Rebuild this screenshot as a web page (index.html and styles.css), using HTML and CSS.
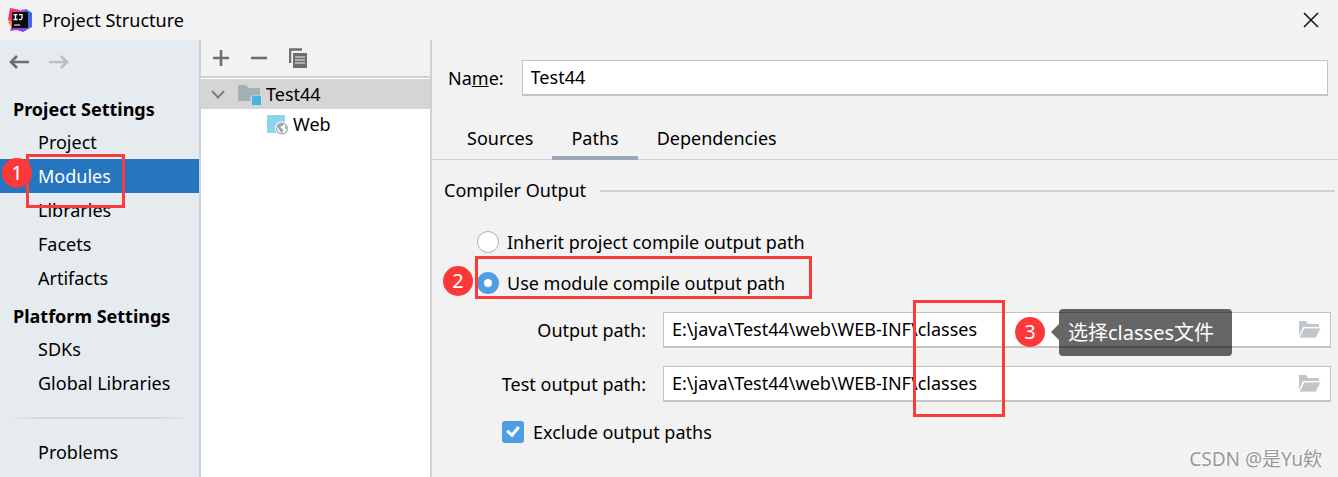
FILE: index.html
```html
<!DOCTYPE html>
<html lang="en">
<head>
<meta charset="utf-8">
<title>Project Structure</title>
<link rel="stylesheet" href="styles.css">
</head>
<body>
<div class="window">
  <header class="titlebar">
    <svg class="logo" width="24" height="24" viewBox="0 0 24 24" aria-hidden="true">
      <defs>
        <linearGradient id="pink" x1="0" y1="0" x2="1" y2="1"><stop offset="0" stop-color="#ff2d50"/><stop offset="1" stop-color="#e8379a"/></linearGradient>
        <linearGradient id="blue" x1="0" y1="0" x2="0" y2="1"><stop offset="0" stop-color="#2f6fe0"/><stop offset="1" stop-color="#5a5cf0"/></linearGradient>
      </defs>
      <path d="M0 14l6-3 4 9-6 0z" fill="#f78a1f"/>
      <path d="M2 0l10 2 3 5-8 9-7-4z" fill="url(#pink)"/>
      <path d="M13 3l5-2 6 4v14l-9 5-6-4z" fill="url(#blue)"/>
      <path d="M11 4l4-3 3 5-5 1z" fill="#b54ac8"/>
      <path d="M4 17h6l6 7-4-1-4-1-6 1z" fill="#a33fd6"/>
      <rect x="4" y="4" width="16" height="16" fill="#0c0a10"/>
      <path d="M5.500 6.600h4M7.500 6.600v5M5.500 11.500h4M11 6.600h3v3.500q0 1.500-1.500 1.500H11" fill="none" stroke="#fff" stroke-width="1.300"/>
      <path d="M6 17h6" stroke="#fff" stroke-width="1"/>
    </svg>
    <h1 class="title">Project Structure</h1>
    <button class="close" aria-label="Close">
      <svg width="16" height="16" viewBox="0 0 16 16"><path d="M1 1l14 14M15 1L1 15" stroke="#111" stroke-width="1.500"/></svg>
    </button>
  </header>

  <div class="content">
    <nav class="sidebar">
      <div class="history">
        <button class="icon-button" aria-label="Back"><svg width="20" height="14" viewBox="0 0 20 14" fill="none" stroke="#6e6e6e" stroke-width="2.600"><path d="M20 7H2M8 1L2 7l6 6"/></svg></button>
        <button class="icon-button" aria-label="Forward"><svg width="20" height="14" viewBox="0 0 20 14" fill="none" stroke="#bdbfc1" stroke-width="2.600"><path d="M0 7h18M12 1l6 6-6 6"/></svg></button>
      </div>
      <h2 class="group">Project Settings</h2>
      <ul class="links">
        <li><a href="#">Project</a></li>
        <li class="marked"><a href="#" class="selected" aria-current="page">Modules</a><span class="frame frame-modules"></span><span class="step step-one">1</span></li>
        <li><a href="#">Libraries</a></li>
        <li><a href="#">Facets</a></li>
        <li><a href="#">Artifacts</a></li>
      </ul>
      <h2 class="group">Platform Settings</h2>
      <ul class="links">
        <li><a href="#">SDKs</a></li>
        <li><a href="#">Global Libraries</a></li>
      </ul>
      <div class="separator"></div>
      <ul class="links">
        <li><a href="#">Problems</a></li>
      </ul>
    </nav>

    <section class="modules" aria-label="Modules">
      <div class="toolbar">
        <button class="icon-button" aria-label="Add"><svg width="16" height="16" viewBox="0 0 16 16"><path d="M8 0v16M0 8h16" stroke="#6e6e6e" stroke-width="2.600"/></svg></button>
        <button class="icon-button" aria-label="Remove"><svg width="16" height="16" viewBox="0 0 16 16"><path d="M0 8h16" stroke="#6e6e6e" stroke-width="2.600"/></svg></button>
        <button class="icon-button" aria-label="Copy"><svg width="20" height="20" viewBox="0 0 20 20"><path d="M1 15V1.500h12" fill="none" stroke="#6e6e6e" stroke-width="2.500"/><path d="M4 5h14v15H4z" fill="#6e6e6e"/><path d="M6 9h10M6 12h10M6 15h10" stroke="#f2f2f2" stroke-width="1.200"/></svg></button>
      </div>
      <ul class="tree">
        <li class="node current">
          <svg width="14" height="9" viewBox="0 0 14 9"><path d="M1 1l6 6.500L13 1" fill="none" stroke="#7f7f7f" stroke-width="2"/></svg>
          <svg class="folder" width="24" height="22" viewBox="0 0 24 22"><path d="M0 2h8l3 3h11v13H0z" fill="#a4b0b8"/><path d="M12.500 12.500H24V22H12.500z" fill="#d5d5d5"/><path d="M14 13h9v9h-9z" fill="#40b6e0"/></svg>
          <span>Test44</span>
        </li>
        <li class="node child">
          <svg width="22" height="22" viewBox="0 0 22 22"><path d="M0 2h18v18H0z" fill="#8dd5ec"/><circle cx="15" cy="15.500" r="7" fill="#fff"/><circle cx="15" cy="15.500" r="5.400" fill="#fff" stroke="#9aa7b0" stroke-width="1.200"/><path d="M10 13l3-3 4 .5-1 2-3 1.500 2 1.500 1.500 2-2 3-1.500-2.500zM18 12l2 3-2 1z" fill="#9aa7b0"/></svg>
          <span>Web</span>
        </li>
      </ul>
    </section>

    <main class="editor">
      <div class="name-row">
        <label for="name">Na<u>m</u>e:</label>
        <input class="textbox" id="name" type="text" value="Test44">
      </div>
      <div class="tabs" role="tablist">
        <button class="tab" role="tab">Sources</button>
        <button class="tab active" role="tab" aria-selected="true">Paths</button>
        <button class="tab" role="tab">Dependencies</button>
      </div>
      <fieldset class="compiler">
        <legend class="legend">Compiler Output</legend>
        <div class="option"><input type="radio" name="mode" id="inherit"><label for="inherit">Inherit project compile output path</label></div>
        <div class="option marked"><input type="radio" name="mode" id="module" checked><label for="module">Use module compile output path</label><span class="frame frame-option"></span><span class="step step-two">2</span></div>
        <div class="paths marked">
          <label for="output">Output path:</label>
          <div class="textbox browse">
            <input id="output" type="text" value="E:\java\Test44\web\WEB-INF\classes">
            <button class="icon-button" aria-label="Browse output path"><svg width="24" height="20" viewBox="0 0 24 20"><path d="M1 17V2h7l2 3h11v3H5z" fill="#c1c6ca"/><path d="M6 9h17l-5 10H1z" fill="#c1c6ca" stroke="#fff" stroke-width=".8"/></svg></button>
          </div>
          <label for="test-output">Test output path:</label>
          <div class="textbox browse">
            <input id="test-output" type="text" value="E:\java\Test44\web\WEB-INF\classes">
            <button class="icon-button" aria-label="Browse test output path"><svg width="24" height="20" viewBox="0 0 24 20"><path d="M1 17V2h7l2 3h11v3H5z" fill="#c1c6ca"/><path d="M6 9h17l-5 10H1z" fill="#c1c6ca" stroke="#fff" stroke-width=".8"/></svg></button>
          </div>
          <span class="frame frame-paths"></span>
          <span class="step step-three">3</span>
          <span class="tip">选择classes文件</span>
        </div>
        <div class="exclude"><input type="checkbox" id="exclude" checked><label for="exclude">Exclude output paths</label></div>
      </fieldset>
      <div class="watermark">CSDN @是Yu欸</div>
    </main>
  </div>
</div>
</body>
</html>
```
FILE: styles.css
```css
* { box-sizing: border-box; }
body {
  margin: 0;
  background: #f2f2f2;
  color: #000;
  font: 18px/24px "Noto Sans", "Noto Sans CJK SC", sans-serif;
}
button, input { font: inherit; color: inherit; }
button { border: 0; padding: 0; background: none; }
ul { list-style: none; margin: 0; padding: 0; }
svg { display: block; flex: none; }
.window { min-height: 100vh; display: flex; flex-direction: column; }
.titlebar { display: flex; align-items: center; gap: 10px; height: 40px; padding: 0 19px 0 8px; }
.title { flex: 1; margin: 0; font-size: 18px; font-weight: 400; }
.content { flex: 1; display: grid; grid-template-columns: 201px 231px 1fr; }

.sidebar { background: #e6ebef; border-right: 2px solid #d1d1d1; }
.history { display: flex; gap: 20px; padding: 15px 9px; height: 48px; }
.icon-button { display: flex; align-items: center; justify-content: center; flex: none; }
.history .icon-button { height: 14px; }
.group { margin: 5px 0 0; padding-left: 13px; font-size: 18px; font-weight: 700; line-height: 32px; }
.links a { display: block; padding-left: 38px; line-height: 34px; color: #000; text-decoration: none; }
.links .selected { background: #2675bf; color: #fff; }
.separator { height: 2px; margin: 17px 8px 16px; background: linear-gradient(90deg, transparent, #d3d6d9 20%, #d3d6d9 80%, transparent); }

.modules { background: #fff; border-right: 2px solid #d1d1d1; }
.toolbar { display: flex; align-items: center; gap: 22px; height: 38px; padding-left: 12px; background: #f2f2f2; border-bottom: 2px solid #d1d1d1; }
.tree { padding-top: 1px; }
.node { display: flex; align-items: center; height: 30px; }
.current { padding-left: 10px; background: #d5d5d5; }
.folder { margin: 0 4px 0 13px; }
.child { gap: 4px; padding-left: 66px; }

.editor { position: relative; min-width: 0; }
.name-row { display: flex; align-items: center; gap: 18px; padding: 20px 10px 0 16px; }
.textbox { flex: 1; min-width: 0; height: 36px; padding: 0 8px 1px; background: #fff; border: 1px solid #c4c4c4; border-bottom-width: 2px; }
.tabs { display: flex; height: 64px; padding: 24px 0 0 16px; border-bottom: 1px solid #cfcfcf; }
.tab { height: 40px; padding: 0 19px; border-bottom: 4px solid transparent; }
.tab.active { border-color: #9ca8b8; }
.compiler { margin: 0; border: 0; padding: 0 3px 0 12px; min-width: 0; }
.legend { display: flex; align-items: center; gap: 14px; width: 100%; padding: 0; line-height: 61px; }
.legend::after { content: ""; flex: 1; height: 2px; background: #d1d1d1; }
.option { display: flex; align-items: center; gap: 8px; height: 41px; padding-left: 33px; }
.option input, .exclude input { appearance: none; margin: 0; width: 22px; height: 22px; }
.option input { border: 1px solid #b0b0b0; border-radius: 50%; background: #fff; }
.option input:checked { border: 7px solid #4f9ee3; }
.paths { display: grid; grid-template-columns: 202px 1fr; gap: 18px 17px; align-items: center; padding: 9px 4px 0 0; text-align: right; }
.browse { display: flex; align-items: center; }
.browse input { flex: 1; min-width: 0; border: 0; padding: 0; outline: 0; background: none; }
.exclude { display: flex; align-items: center; gap: 9px; padding: 18px 0 0 58px; }
.exclude input { position: relative; border-radius: 3px; background: #4f9ee3; }
.exclude input:checked::after { content: ""; position: absolute; left: 7px; top: 3px; width: 5px; height: 9px; border: solid #fff; border-width: 0 3px 3px 0; transform: rotate(40deg); }

.marked { position: relative; }
.frame { position: absolute; border: 3px solid #fc3b3b; pointer-events: none; z-index: 1; }
.frame-modules { left: 26px; top: -5px; width: 99px; height: 54px; }
.frame-option { left: 31px; top: -6px; width: 337px; height: 43px; }
.frame-paths { left: 469px; top: -3px; width: 92px; height: 117px; }
.step { position: absolute; width: 30px; height: 30px; border-radius: 50%; background: #fc3838; color: #fff; font-size: 20px; line-height: 30px; text-align: center; z-index: 1; }
.step-one { left: 2px; top: -1px; }
.step-two { left: -1px; top: 4px; }
.step-three { left: 571px; top: 14px; }
.tip { position: absolute; left: 615px; top: 6px; padding: 0 18px 0 9px; border-radius: 4px; background: rgba(0, 0, 0, .6); color: #fff; font-size: 20px; line-height: 47px; white-space: nowrap; }
.tip::before { content: ""; position: absolute; right: 100%; top: 15px; border: 8px solid transparent; border-left: 0; border-right-color: rgba(0, 0, 0, .6); }
.watermark { position: absolute; right: 16px; bottom: 4px; color: #999; font-size: 19px; line-height: 28px; text-shadow: -1px -1px #fff; }
```
